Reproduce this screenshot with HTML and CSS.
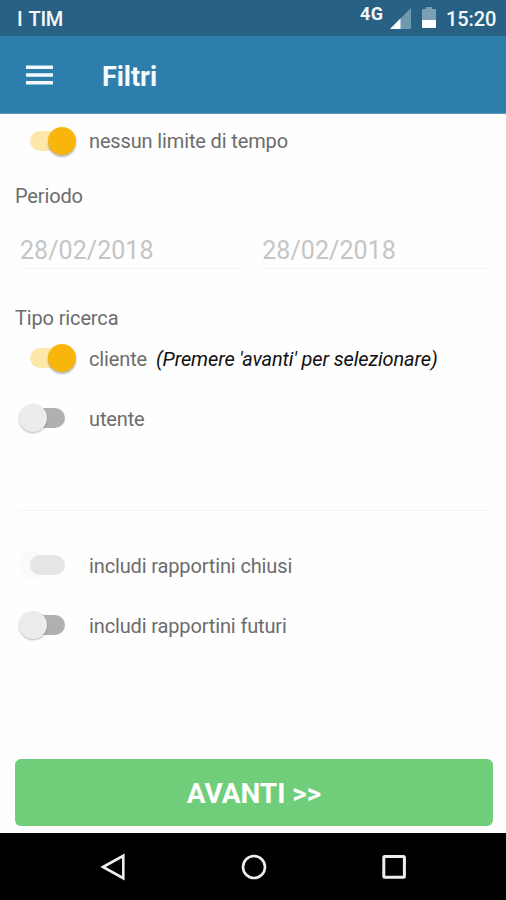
FILE: index.html
```html
<!DOCTYPE html>
<html lang="it">
<head>
<meta charset="utf-8">
<title>Filtri</title>
<link rel="stylesheet" href="styles.css">
</head>
<body>
<div class="status">
  <span class="carrier">I TIM</span>
  <span class="network">4G</span>
  <svg class="signal" width="22" height="21" viewBox="0 0 22 21"><path d="M21 0V21H0Z" fill="#7199ae"/><path d="M10.5 10.5V21H0Z" fill="#fff"/></svg>
  <svg class="battery" width="14" height="21" viewBox="0 0 14 21"><path d="M4 0h6v2h3q1 0 1 1v10H0V3q0-1 1-1h3z" fill="#7ba0b4"/><path d="M0 13h14v7q0 1-1 1H1q-1 0-1-1z" fill="#fff"/></svg>
  <span class="clock">15:20</span>
</div>
<header class="bar">
  <svg class="menu" width="27" height="20" viewBox="0 0 27 20"><path d="M0 2.2h27M0 10h27M0 17.8h27" stroke="#f2f8fb" stroke-width="3.4"/></svg>
  <h1 class="title">Filtri</h1>
</header>
<main class="form">
  <div class="row row-time"><span class="switch on"></span><span class="label">nessun limite di tempo</span></div>
  <h2 class="section period">Periodo</h2>
  <div class="dates"><span class="date">28/02/2018</span><span class="date">28/02/2018</span></div>
  <h2 class="section search">Tipo ricerca</h2>
  <div class="row row-client"><span class="switch on"></span><span class="label">cliente</span><em class="hint">(Premere 'avanti' per selezionare)</em></div>
  <div class="row"><span class="switch"></span><span class="label">utente</span></div>
  <hr class="divider">
  <div class="row"><span class="switch disabled"></span><span class="label">includi rapportini chiusi</span></div>
  <div class="row"><span class="switch"></span><span class="label">includi rapportini futuri</span></div>
  <button class="next">AVANTI &gt;&gt;</button>
</main>
<nav class="nav">
  <svg width="26" height="28" viewBox="0 0 26 28"><path d="M3 14 23.3 2.8v22.4z" fill="none" stroke="#eee" stroke-width="2.6"/></svg>
  <svg width="26" height="28" viewBox="0 0 26 28"><circle cx="13" cy="14" r="11" fill="none" stroke="#eee" stroke-width="2.6"/></svg>
  <svg width="26" height="28" viewBox="0 0 26 28"><rect x="2.8" y="3.6" width="20.6" height="20.6" rx="1" fill="none" stroke="#eee" stroke-width="3"/></svg>
</nav>
</body>
</html>
```
FILE: styles.css
```css
* { box-sizing: border-box; }
body {
  margin: 0;
  width: 506px;
  height: 900px;
  display: flex;
  flex-direction: column;
  overflow: hidden;
  background: #fefefe;
  font-family: Roboto, "Liberation Sans", sans-serif;
  color: #6c6c6c;
}
.status {
  height: 36px;
  flex: none;
  display: flex;
  align-items: flex-start;
  padding-left: 17px;
  background: #286184;
  color: #f5f9fb;
  font-weight: 500;
}
.carrier { width: 343px; padding-top: 7px; font-size: 20px; line-height: 24px; letter-spacing: -0.3px; word-spacing: 2px; }
.network { width: 30px; padding-top: 3px; font-size: 18px; line-height: 22px; font-weight: 700; letter-spacing: 0.4px; }
.signal { margin-top: 8px; }
.battery { margin: 7px 0 0 10px; }
.clock { margin-left: 10px; padding-top: 7px; font-size: 20px; line-height: 24px; letter-spacing: -0.1px; }
.bar {
  height: 78px;
  flex: none;
  display: flex;
  align-items: center;
  padding-left: 26px;
  background: #2e7eac;
  border-bottom: 1px solid #5795b9;
}
.menu { margin-right: 49px; }
.title { margin: 4px 0 0; color: #f7fbfd; font-size: 27px; line-height: 32px; font-weight: 700; letter-spacing: -0.05px; }
.form { flex: 1; display: flex; flex-direction: column; padding: 0 13.5px 7.5px 14.5px; }
.row {
  height: 60.5px;
  flex: none;
  display: flex;
  align-items: center;
  padding-left: 0.5px;
  font-size: 20px;
  line-height: 24px;
  letter-spacing: -0.14px;
}
.row-time { height: 54px; }
.row-client { height: 60px; margin-top: -2px; }
.label, .hint { padding-top: 2px; }
.row-time .label { padding-top: 0; }
.switch {
  position: relative;
  width: 35px;
  height: 20px;
  flex: none;
  margin: 0 24px 0 15px;
  border-radius: 10px;
  background: #b0b0b0;
}
.switch::after {
  content: "";
  position: absolute;
  top: -4px;
  left: -11px;
  width: 28px;
  height: 28px;
  border-radius: 50%;
  background: #ececec;
  box-shadow: 0 1px 2px rgba(0, 0, 0, .28);
}
.switch.on { background: #fde7aa; }
.switch.on::after { left: 18px; background: #f8b60d; box-shadow: 0 2px 2px rgba(0, 0, 0, .28); }
.switch.disabled { background: #e6e6e6; }
.switch.disabled::after { background: rgba(225, 225, 225, .13); box-shadow: 0 1px 2px rgba(0, 0, 0, .02); }
.section { margin: 0; padding-left: 0.5px; font-size: 20px; line-height: 24px; font-weight: 400; letter-spacing: -0.14px; }
.period { margin-top: 16px; }
.search { margin-top: 37px; }
.dates { display: flex; gap: 18px; margin: 24px 6px 0 5.5px; }
.date {
  flex: 1;
  height: 37px;
  border-bottom: 1px solid #f3f3f3;
  color: #c5c5c5;
  font-size: 25px;
  line-height: 38px;
  letter-spacing: 0.05px;
}
.hint { margin-left: 9px; color: #111; letter-spacing: -0.12px; }
.divider { width: 468px; height: 1px; flex: none; margin: 61px 0 24px 5.5px; border: 0; background: #f2f2f2; }
.next {
  height: 67px;
  margin-top: auto;
  border: 0;
  border-radius: 6px;
  background: #70ce7b;
  color: #fff;
  font: 700 28px/32px Roboto, "Liberation Sans", sans-serif;
  padding: 4px 0 0 1px;
}
.nav {
  height: 67px;
  flex: none;
  display: flex;
  gap: 114.5px;
  align-items: center;
  padding-left: 100px;
  background: #000;
}
```
